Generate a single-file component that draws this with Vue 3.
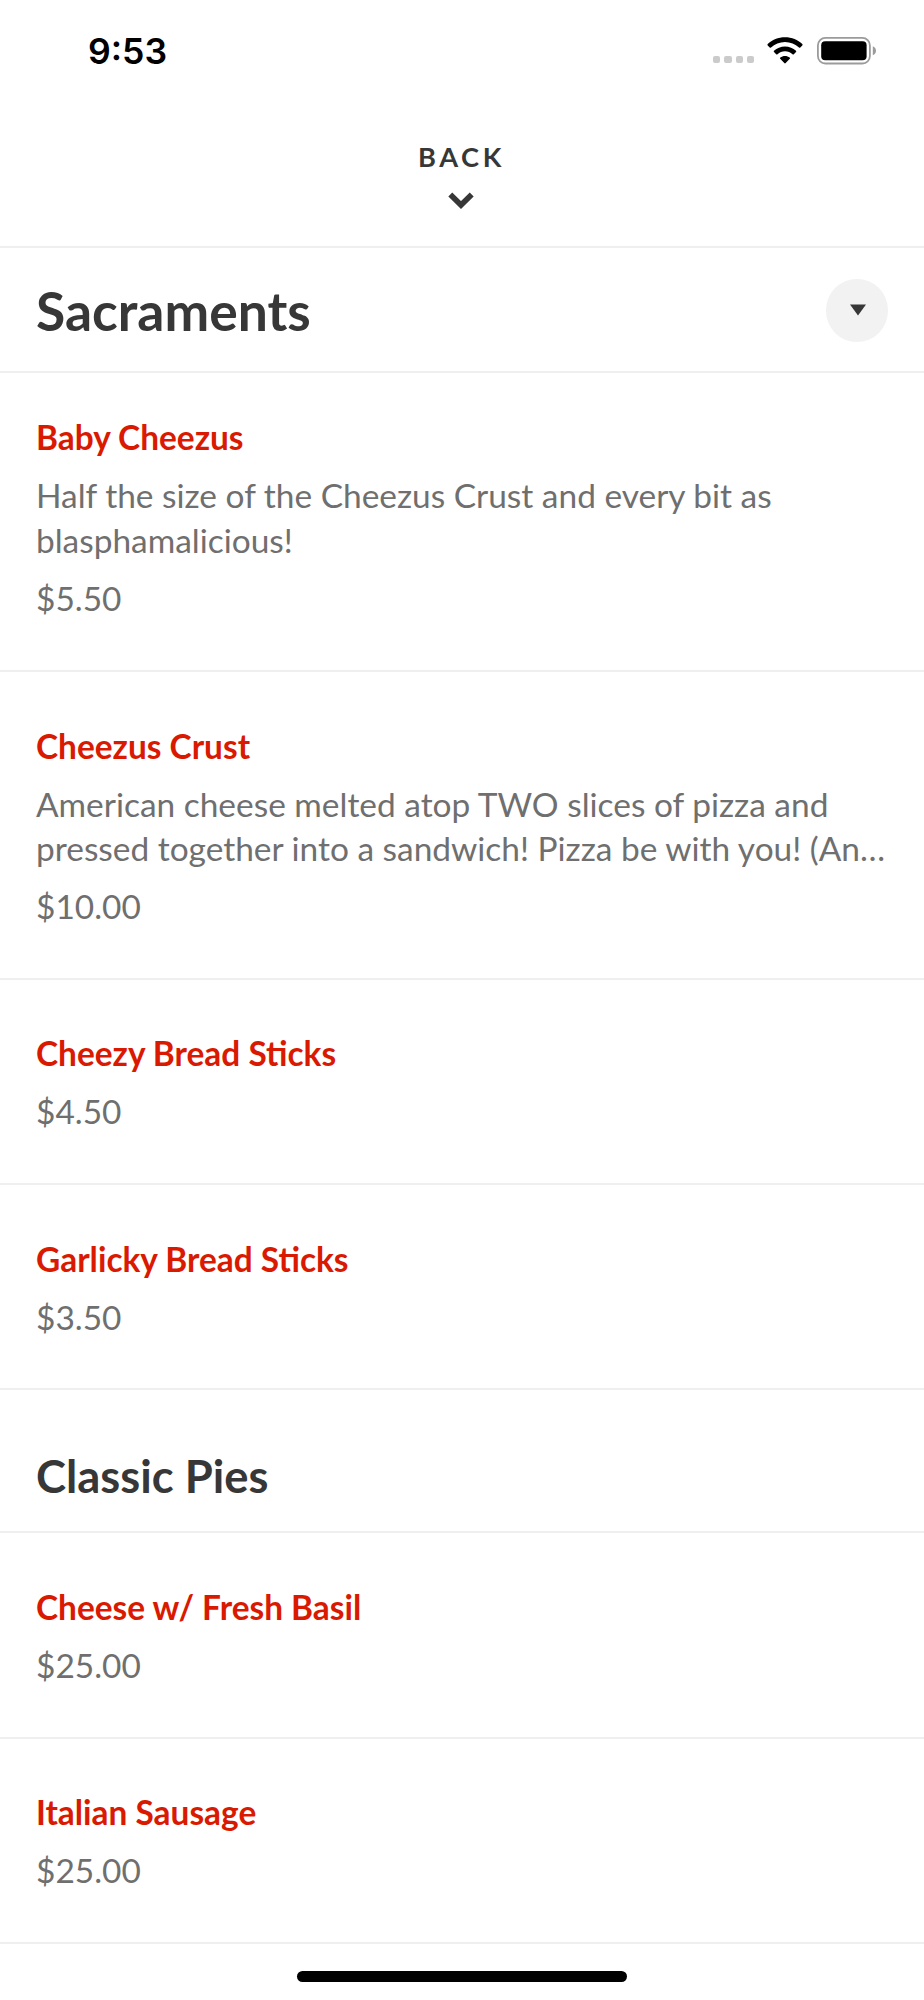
<template>
    <div class="screen">
        <div class="status-bar">
            <span class="time">9:53</span>
            <div class="status-icons">
                <div class="signal">
                    <i v-for="n in 4" :key="n"></i>
                </div>
                <svg class="wifi" viewBox="0 0 36 28" width="36" height="28">
                    <path d="M18 0.3C24.800 0.3 30.900 2.900 35.300 7.100C35.700 7.500 35.700 8 35.300 8.400L33.300 10.500C32.900 10.900 32.400 10.900 32 10.500C28.300 7 23.400 4.900 18 4.900C12.600 4.900 7.700 7 4 10.500C3.600 10.900 3.100 10.900 2.700 10.500L0.700 8.400C0.300 8 0.300 7.500 0.700 7.100C5.100 2.900 11.200 0.300 18 0.300Z" />
                    <path d="M18 9.500C22.300 9.500 26.100 11.100 29 13.800C29.400 14.200 29.400 14.700 29 15.100L26.800 17.300C26.400 17.700 26 17.700 25.500 17.300C23.500 15.500 20.900 14.300 18 14.300C15.100 14.300 12.500 15.500 10.500 17.300C10 17.700 9.600 17.700 9.200 17.300L7 15.100C6.600 14.700 6.600 14.200 7 13.800C9.900 11.100 13.700 9.500 18 9.500Z" />
                    <path d="M18 18.900C19.800 18.900 21.400 19.500 22.700 20.500C23.200 20.900 23.200 21.400 22.800 21.800L18.700 26.100C18.300 26.500 17.700 26.500 17.300 26.100L13.200 21.800C12.800 21.400 12.800 20.900 13.300 20.500C14.600 19.500 16.200 18.900 18 18.900Z" />
                </svg>
                <svg class="battery" viewBox="0 0 60 28" width="60" height="28">
                    <rect x="0.900" y="0.900" width="52" height="25.600" rx="7.500" fill="none" stroke="#9b9b9b" stroke-width="1.800" />
                    <rect x="4.200" y="4.200" width="45.400" height="19" rx="4" />
                    <path d="M55.800 9.200C57.800 10 59 11.700 59 13.700C59 15.700 57.800 17.400 55.800 18.200Z" fill="#9b9b9b" />
                </svg>
            </div>
        </div>

        <div class="back">
            <span class="back-label">BACK</span>
            <svg class="chevron" viewBox="0 0 26 17" width="26" height="17">
                <path d="M2.300 2.500L13 13L23.700 2.500" fill="none" stroke="#373737" stroke-width="5.600" />
            </svg>
        </div>

        <div class="menu-header">
            <h1>Sacraments</h1>
            <button class="toggle" aria-label="Menus">
                <svg viewBox="0 0 16 12" width="16" height="12">
                    <path d="M0 0.400H16L8 11.600Z" fill="#373737" />
                </svg>
            </button>
        </div>

        <section v-for="section in sections" :key="section.id">
            <h2 v-if="section.title">{{ section.title }}</h2>
            <div v-for="item in section.items" :key="item.name" class="item">
                <h3>{{ item.name }}</h3>
                <p v-if="item.lines" class="description">
                    <span v-for="line in item.lines" :key="line">{{ line }}</span>
                </p>
                <p class="price">{{ item.price }}</p>
            </div>
        </section>

        <div class="home-indicator"></div>
    </div>
</template>

<script setup>
import { ref } from 'vue'

// Data
const sections = ref([
    {
        id: 'sacraments',
        items: [
            {
                name: 'Baby Cheezus',
                lines: ['Half the size of the Cheezus Crust and every bit as', 'blasphamalicious!'],
                price: '$5.50'
            },
            {
                name: 'Cheezus Crust',
                lines: ['American cheese melted atop TWO slices of pizza and', 'pressed together into a sandwich! Pizza be with you! (An…'],
                price: '$10.00'
            },
            { name: 'Cheezy Bread Sticks', price: '$4.50' },
            { name: 'Garlicky Bread Sticks', price: '$3.50' }
        ]
    },
    {
        id: 'classic-pies',
        title: 'Classic Pies',
        items: [
            { name: 'Cheese w/ Fresh Basil', price: '$25.00' },
            { name: 'Italian Sausage', price: '$25.00' }
        ]
    }
])
</script>

<style>
body {
    margin: 0;
    background: #fff;
}
</style>

<style scoped>
.screen {
    position: relative;
    width: 924px;
    height: 2000px;
    overflow: hidden;
    background: #fff;
    font-family: Lato, "Liberation Sans", sans-serif;
    color: #373737;
}

h1,
h2,
h3,
p {
    margin: 0;
}

.status-bar {
    display: flex;
    justify-content: space-between;
    box-sizing: border-box;
    height: 116px;
    padding: 29px 47px 0 88px;
    color: #000;
}

.time {
    padding-top: 1px;
    font-family: Inter, "Liberation Sans", sans-serif;
    font-size: 35.600px;
    font-weight: 600;
    line-height: 44px;
}

.status-icons {
    display: flex;
    align-items: flex-start;
    padding-top: 7.500px;
}

.signal {
    display: flex;
    gap: 4px;
    margin: 19.500px 13px 0 0;
}

.signal i {
    width: 7.200px;
    height: 7.200px;
    border-radius: 2px;
    background: #cbcbcb;
}

.wifi {
    margin-right: 14px;
}

.back {
    display: flex;
    flex-direction: column;
    align-items: center;
    box-sizing: border-box;
    height: 132px;
    padding: 24px 3px 0 0;
    border-bottom: 2px solid #efefef;
}

.back-label {
    margin-left: 2px;
    font-size: 27.200px;
    font-weight: 700;
    line-height: 34px;
    letter-spacing: 3.600px;
}

.chevron {
    margin-top: 18px;
}

.menu-header {
    display: flex;
    align-items: center;
    justify-content: space-between;
    box-sizing: border-box;
    height: 125px;
    padding: 1.500px 36px 0;
    border-bottom: 2px solid #efefef;
}

h1 {
    padding-bottom: 1px;
    font-size: 53.400px;
    font-weight: 700;
    line-height: 64px;
}

.toggle {
    display: flex;
    align-items: center;
    justify-content: center;
    width: 62.500px;
    height: 62.500px;
    padding: 0 0 0 2px;
    border: 0;
    border-radius: 50%;
    background: #f2f2f2;
}

h2 {
    box-sizing: border-box;
    height: 143px;
    padding: 59px 36px 0;
    border-bottom: 2px solid #efefef;
    font-size: 45.400px;
    font-weight: 700;
    line-height: 54px;
}

.item {
    padding: 51.700px 36px 49.100px;
    border-bottom: 2px solid #efefef;
    font-size: 33.450px;
    line-height: 44.500px;
}

section:first-of-type .item:first-of-type {
    padding-top: 42px;
    padding-bottom: 49.900px;
}

h3 {
    margin-bottom: 13.500px;
    font-size: 33.420px;
    font-weight: 700;
    color: #da1a00;
}

.description {
    margin-bottom: 13.500px;
    color: #6f6f6f;
}

.description span {
    display: block;
    white-space: nowrap;
}

.price {
    color: #6f6f6f;
}

.home-indicator {
    position: absolute;
    bottom: 18px;
    left: 297px;
    width: 330px;
    height: 11px;
    border-radius: 6px;
    background: #000;
}
</style>
